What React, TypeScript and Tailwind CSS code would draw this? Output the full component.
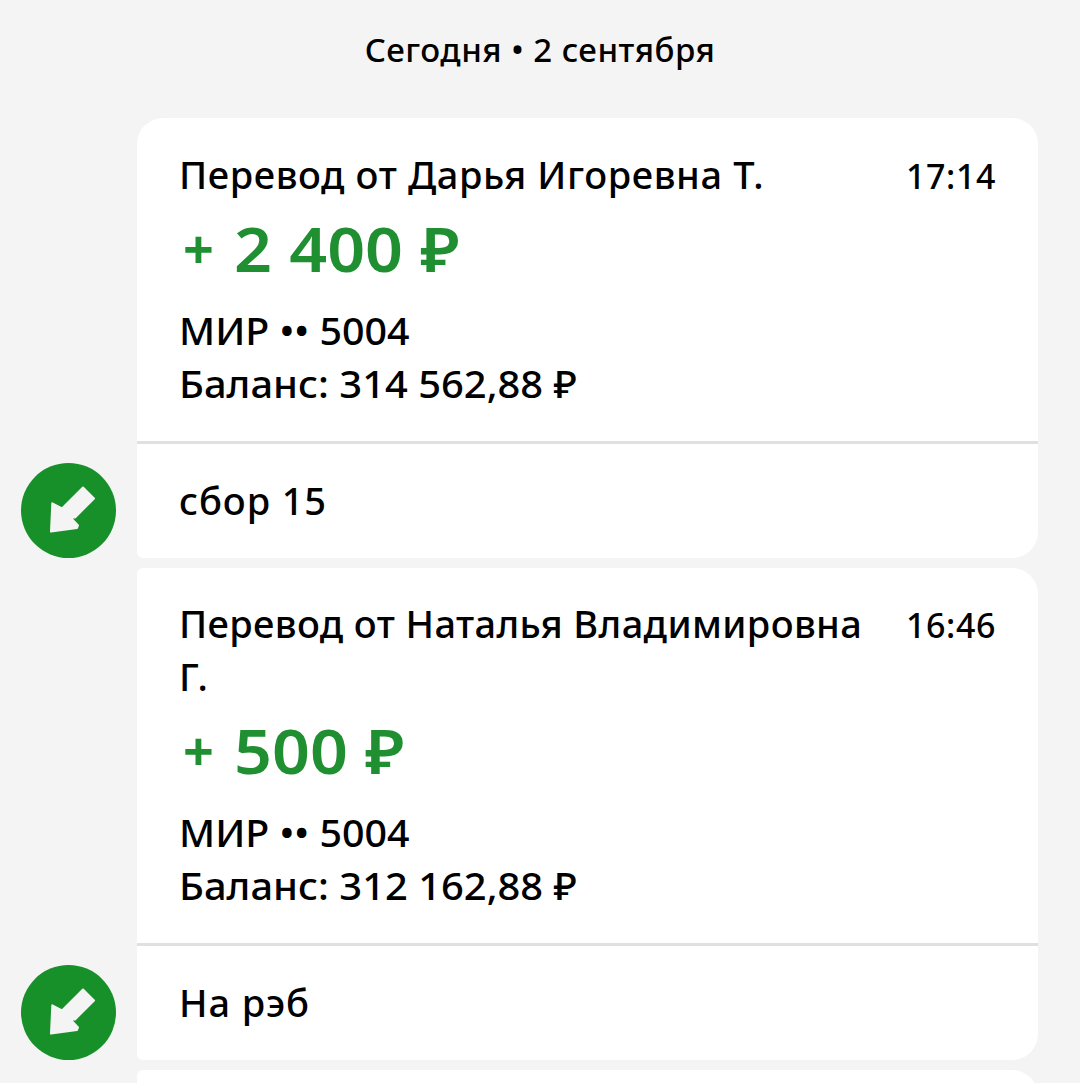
import React from 'react';

interface Transfer {
  title: string;
  time: string;
  amount: string;
  card: string;
  balance: string;
  note: string;
}

const transfers: Transfer[] = [
  {
    title: 'Перевод от Дарья Игоревна Т.',
    time: '17:14',
    amount: '2 400 ₽',
    card: 'МИР •• 5004',
    balance: 'Баланс: 314 562,88 ₽',
    note: 'сбор 15',
  },
  {
    title: 'Перевод от Наталья Владимировна Г.',
    time: '16:46',
    amount: '500 ₽',
    card: 'МИР •• 5004',
    balance: 'Баланс: 312 162,88 ₽',
    note: 'На рэб',
  },
];

const IncomingIcon: React.FC = () => (
  <svg className="w-[95px] h-[95px] shrink-0" viewBox="0 0 95 95">
    <circle cx="47.5" cy="47.5" r="47.5" fill="#17902a" />
    <path
      d="M62 24.5L73 35.5L54 54.5L49.5 54.5L57 62.5L56 65L30 68.5L31.3 40.3L41 45.5Z"
      fill="#f4f4f4"
      stroke="#f4f4f4"
      strokeWidth="2"
      strokeLinejoin="round"
    />
  </svg>
);

const TransferRow: React.FC<{ transfer: Transfer; first: boolean }> = ({ transfer, first }) => (
  <div className="flex items-end gap-[21px]">
    <IncomingIcon />
    <div className={`w-[901px] bg-white rounded-l-[6px] rounded-r-[26px] ${first ? 'rounded-tl-[26px]' : ''}`}>
      <div className={`${first ? 'pt-[30px]' : 'pt-[29px]'} pb-[31px] pl-[42px] pr-[42px]`}>
        <div className="flex justify-between items-start">
          <h2 className={`w-[700px] ${first ? 'tracking-[0.6px]' : 'tracking-[0.38px]'}`}>{transfer.title}</h2>
          <time className="pt-[2px] h-[53px] text-[34px] leading-[53px] tracking-[0.6px]">{transfer.time}</time>
        </div>
        <p className="flex items-center h-[94px] text-[62px] leading-[94px] font-semibold text-[#1f8f31]">
          <span className="w-[55px] pl-[4px] text-[54px] font-bold">+</span>
          <span className="origin-left scale-x-[1.07]">{transfer.amount}</span>
        </p>
        <div className="mt-[9px]">
          <p className="origin-left scale-x-[1.036]">{transfer.card}</p>
          <p className="origin-left scale-x-[1.05]">{transfer.balance}</p>
        </div>
      </div>
      <p className="border-t-[3px] border-[#dfe0e0] pt-[30px] pb-[31px] pl-[42px] tracking-[0.9px]">{transfer.note}</p>
    </div>
  </div>
);

const App: React.FC = () => {
  return (
    <div className="h-[1083px] overflow-hidden bg-[#f4f4f4] text-black font-medium text-[38px] leading-[53px] font-['Noto_Sans',sans-serif]">
      <h1 className="pt-[25px] h-[118px] text-center text-[33px] leading-[50px] tracking-[0.5px]">Сегодня • 2 сентября</h1>
      <div className="flex flex-col gap-[10px] pl-[21px]">
        {transfers.map((transfer, i) => (
          <TransferRow key={transfer.time} transfer={transfer} first={i === 0} />
        ))}
        {/* Next card, cut off by the bottom edge */}
        <div className="ml-[116px] w-[901px] h-[200px] bg-white rounded-l-[6px] rounded-r-[26px]" />
      </div>
    </div>
  );
};

export default App;
